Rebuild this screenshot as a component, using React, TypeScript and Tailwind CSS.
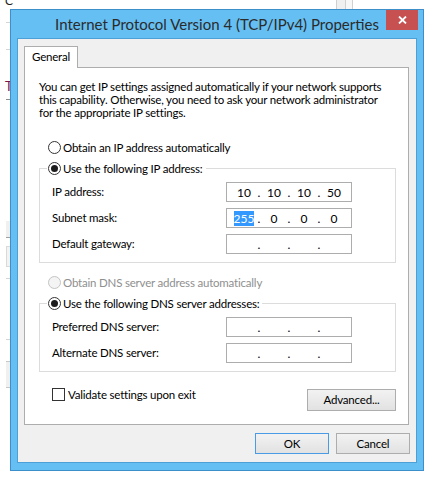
import { Fragment } from "react";

const font = "font-['Lato','Noto_Sans',sans-serif]";
const body = "text-[11.5px] tracking-[-0.2px]";

function Radio({ checked, disabled }: { checked?: boolean; disabled?: boolean }) {
  return (
    <span
      className={`flex h-[13px] w-[13px] shrink-0 items-center justify-center rounded-full border ${
        disabled ? "border-[#c4c4c4] bg-[#f4f4f4]" : "border-[#333333] bg-white"
      }`}
    >
      {checked && <span className="h-[7px] w-[7px] rounded-full bg-[#1c1c1c]" />}
    </span>
  );
}

function IpField({ parts, selectFirst }: { parts?: string[]; selectFirst?: boolean }) {
  const p = parts ?? ["", "", "", ""];
  return (
    <div className="flex h-[20px] w-[126px] items-center border border-[#adadad] bg-white pl-[6px] text-[12px] leading-[13px] tracking-normal text-black">
      {p.map((v, i) => (
        <Fragment key={i}>
          {i > 0 && <span className="w-[8px] text-center">.</span>}
          <span className="w-[22px] text-center">
            {selectFirst && i === 0 ? <span className="bg-[#3399ff] text-white">{v}</span> : v}
          </span>
        </Fragment>
      ))}
    </div>
  );
}

function FieldRow({ label, parts, selectFirst }: { label: string; parts?: string[]; selectFirst?: boolean }) {
  return (
    <div className="flex h-[20px] items-center pl-[12px]">
      <span className="w-[174px]">{label}</span>
      <IpField parts={parts} selectFirst={selectFirst} />
    </div>
  );
}

function Button({ children, primary, className = "" }: { children: string; primary?: boolean; className?: string }) {
  return (
    <button
      type="button"
      className={`flex items-center justify-center border bg-linear-to-b from-[#f2f2f2] to-[#e2e2e2] text-black ${body} ${
        primary ? "border-[#4a9be6]" : "border-[#adadad]"
      } ${className}`}
    >
      {children}
    </button>
  );
}

function Dialog() {
  return (
    <div className="flex h-[462px] w-[414px] flex-col border border-[#3d8fcb] bg-[#65bff2] px-[6px] pb-[7px]">
      {/* title bar */}
      <div className="relative flex h-[28px] items-center justify-center">
        <span className="text-[15px] text-[#2b2b2b]">Internet Protocol Version 4 (TCP/IPv4) Properties</span>
        <button
          type="button"
          className="absolute right-[-1px] top-0 flex h-[20px] w-[32px] items-center justify-center bg-[#c75050]"
        >
          <svg width="9" height="8" viewBox="0 0 9 8">
            <path d="M1 0.5 L8 7.5 M8 0.5 L1 7.5" stroke="white" strokeWidth="1.8" />
          </svg>
        </button>
      </div>

      {/* client */}
      <div className="flex flex-1 flex-col border border-[#4d9fd8] bg-[#f0f0f0] px-[6px] pt-[7px]">
        <div
          className={`relative z-10 -mb-px flex h-[22px] w-[54px] items-center border border-b-0 border-[#adadad] bg-white pb-[2px] pl-[7px] text-black ${body}`}
        >
          General
        </div>

        <div
          className={`flex h-[358px] w-[385px] flex-col border border-[#adadad] bg-white pl-[14px] pr-[12px] pt-[12px] text-black ${body}`}
        >
          <p className="whitespace-nowrap leading-[13px]">
            You can get IP settings assigned automatically if your network supports
            <br />
            this capability. Otherwise, you need to ask your network administrator
            <br />
            for the appropriate IP settings.
          </p>

          <label className="ml-[9px] mt-[21px] flex h-[15px] items-center">
            <Radio />
            <span className="ml-[2px]">Obtain an IP address automatically</span>
          </label>

          <div className="mt-[13px] flex h-[95px] flex-col border border-[#dcdcdc]">
            <label className="-mt-[8px] ml-[7px] flex h-[15px] w-fit items-center bg-white pl-[1px] pr-[3px]">
              <Radio checked />
              <span className="ml-[2px]">Use the following IP address:</span>
            </label>
            <div className="mt-[6px] flex flex-col gap-[6px]">
              <FieldRow label="IP address:" parts={["10", "10", "10", "50"]} />
              <FieldRow label="Subnet mask:" parts={["255", "0", "0", "0"]} selectFirst />
              <FieldRow label="Default gateway:" />
            </div>
          </div>

          <label className="ml-[9px] mt-[12px] flex h-[15px] items-center text-[#8f8f8f]">
            <Radio disabled />
            <span className="ml-[2px]">Obtain DNS server address automatically</span>
          </label>

          <div className="mt-[13px] flex h-[69px] flex-col border border-[#dcdcdc]">
            <label className="-mt-[8px] ml-[7px] flex h-[15px] w-fit items-center bg-white pl-[1px] pr-[3px]">
              <Radio checked />
              <span className="ml-[2px]">Use the following DNS server addresses:</span>
            </label>
            <div className="mt-[6px] flex flex-col gap-[6px]">
              <FieldRow label="Preferred DNS server:" />
              <FieldRow label="Alternate DNS server:" />
            </div>
          </div>

          <div className="mt-[16px] flex items-start">
            <label className="ml-[13px] flex h-[13px] items-center">
              <span className="h-[13px] w-[13px] border border-[#333333] bg-white" />
              <span className="ml-[3px]">Validate settings upon exit</span>
            </label>
            <Button className="ml-auto mt-[1px] h-[22px] w-[89px]">Advanced...</Button>
          </div>
        </div>

        <div className="mt-[8px] flex justify-end gap-[7px]">
          <Button primary className="h-[21px] w-[74px]">
            OK
          </Button>
          <Button className="h-[21px] w-[74px]">Cancel</Button>
        </div>
      </div>
    </div>
  );
}

export default function App() {
  return (
    <div className={`h-[479px] w-[437px] overflow-hidden bg-white ${font}`}>
      {/* window behind, top edge */}
      <div className="flex h-[9px] overflow-hidden">
        <span className="-mt-[5px] ml-[5px] text-[12px] leading-[12px] text-[#1f1f1f]">C</span>
        <div className="ml-[323px] flex h-[9px] w-[17px]">
          <div className="w-[9px] border-l border-[#d0d0d0] bg-[#f0f0f0]" />
          <div className="w-[8px] border-x border-[#d0d0d0] bg-[#f7f7f7]" />
        </div>
      </div>

      <div className="flex">
        {/* window behind, left edge */}
        <div className="flex w-[10px] flex-col overflow-hidden">
          <div className="ml-[6px] mt-[13px] h-px bg-[#d5d5d5]" />
          <div className="ml-[6px] mt-[26px] h-px bg-[#d5d5d5]" />
          <span className="ml-[5px] mt-[30px] h-[13px] text-[13px] leading-[13px] text-[#7a1446]">T</span>
          <div className="ml-[6px] mt-[6px] h-px bg-[#8c8c8c]" />
          <div className="ml-[6px] mt-[121px] h-[17px] border-b border-[#a0a0a0] bg-[#f0f0f0]" />
          <div className="ml-[6px] mt-[8px] h-[21px] border border-r-0 border-[#d9d9d9] bg-[#f3f3f3]" />
          <div className="ml-[6px] mt-[11px] h-px bg-[#d5d5d5]" />
          <div className="ml-[6px] mt-[60px] h-px bg-[#d5d5d5]" />
          <div className="ml-[6px] mt-[21px] h-[27px] border-y border-[#c8c8c8] bg-[#f0f0f0]" />
        </div>
        <Dialog />
      </div>
    </div>
  );
}
